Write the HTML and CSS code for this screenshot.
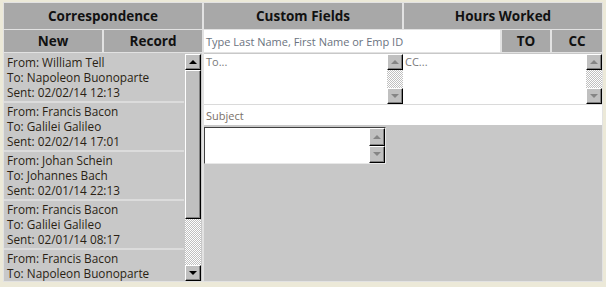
FILE: index.html
```html
<html>
<head>
<title>Correspondence</title>
<link rel="stylesheet" href="styles.css">
</head>
<body>

<div class="frame">
  <div class="head">Correspondence</div>
  <div class="head">Custom Fields</div>
  <div class="head">Hours Worked</div>

  <div class="tabs">
    <div class="head">New</div>
    <div class="head">Record</div>
  </div>

  <div class="search-row">
    <div class="search">Type Last Name, First Name or Emp ID</div>
    <div class="head">TO</div>
    <div class="head">CC</div>
  </div>

  <div class="list-pane">
    <div class="list">
      <div class="item">From: William Tell<br>To: Napoleon Buonoparte<br>Sent: 02/02/14 12:13</div>
      <div class="item">From: Francis Bacon<br>To: Galilei Galileo<br>Sent: 02/02/14 17:01</div>
      <div class="item">From: Johan Schein<br>To: Johannes Bach<br>Sent: 02/01/14 22:13</div>
      <div class="item">From: Francis Bacon<br>To: Galilei Galileo<br>Sent: 02/01/14 08:17</div>
      <div class="item">From: Francis Bacon<br>To: Napoleon Buonoparte</div>
    </div>
    <div class="vscroll">
      <div class="btn up"></div>
      <div class="thumb"></div>
      <div class="track"></div>
      <div class="btn down"></div>
    </div>
  </div>

  <div class="compose">
    <div class="addr-row">
      <div class="memo">
        <div class="memo-text">To...</div>
        <div class="vscroll">
          <div class="btn up off"></div>
          <div class="track"></div>
          <div class="btn down off"></div>
        </div>
      </div>
      <div class="memo">
        <div class="memo-text">CC...</div>
        <div class="vscroll">
          <div class="btn up off"></div>
          <div class="track"></div>
          <div class="btn down off"></div>
        </div>
      </div>
    </div>
    <div class="subject">Subject</div>
    <div class="body-box">
      <div class="memo-text"></div>
      <div class="vscroll">
        <div class="btn up off tall"></div>
        <div class="btn down off tall"></div>
      </div>
    </div>
  </div>
</div>

</body>
</html>
```

FILE: styles.css
```css
body{
margin:0;
background:#ece9d8;
font-family:"Open Sans", sans-serif;
font-size:11px;
color:#222;}

.frame{
margin:2px 0 0 3px;
width:598px;
height:278px;
padding:1px;
background:#e2e2e2;
display:grid;
grid-template-columns:198px 198px 198px;
grid-template-rows:26px 22px 1fr;
gap:1px 2px;}

.head{
background:#a8a8a8;
display:flex;
align-items:center;
justify-content:center;
font-weight:700;
font-size:13.5px;
color:#111;}

.tabs{
display:grid;
grid-template-columns:1fr 1fr;
gap:2px;}

.search-row{
grid-column:2 / 4;
display:grid;
grid-template-columns:1fr 48px 50px;
gap:2px;}

.search{
background:#fff;
color:#6b7380;
padding-left:2px;
display:flex;
align-items:center;}

.list-pane{
background:#c8c8c8;
display:grid;
grid-template-columns:1fr 16px;
gap:1px;
padding:1px 1px 0 0;
overflow:hidden;}

.list{
background:#dcdcdc;
display:flex;
flex-direction:column;
gap:2px;
overflow:hidden;}

.item{
flex:0 0 47px;
background:#c8c8c8;
padding:1px 0 0 3px;
box-sizing:border-box;
font-size:11.8px;
line-height:15px;
color:#2a1f14;
white-space:nowrap;}

.vscroll{
display:flex;
flex-direction:column;}

.btn{
flex:0 0 16px;
box-sizing:border-box;
background:#c0c0c0;
border:1px solid;
border-color:#fff #000 #000 #fff;
box-shadow:inset -1px -1px #808080;
display:flex;
align-items:center;
justify-content:center;}

.btn.tall{flex:1 1 0;}

.btn::after{
content:"";
width:0;
height:0;
border-left:4px solid transparent;
border-right:4px solid transparent;}

.up::after{border-bottom:4px solid #000;}
.down::after{border-top:4px solid #000;}
.off.up::after{border-bottom-color:#858585;}
.off.down::after{border-top-color:#858585;}

.thumb{
flex:0 0 149px;
box-sizing:border-box;
background:#c0c0c0;
border:1px solid;
border-color:#fff #000 #000 #fff;
box-shadow:inset -1px -1px #808080;}

.track{
flex:1;
background:repeating-conic-gradient(#c0c0c0 0 25%, #fff 0 50%) 0 0/2px 2px;}

.compose{
grid-column:2 / 4;
background:#c8c8c8;
padding-top:1px;
display:flex;
flex-direction:column;}

.addr-row{
height:50px;
display:grid;
grid-template-columns:199px 1fr;}

.memo{
display:grid;
grid-template-columns:1fr 16px;
background:#fff;}

.memo-text{
background:#fff;
color:#7a7a7a;
padding:0 2px;}

.subject{
height:20px;
border-top:1px solid #dadada;
background:#fff;
color:#7a7068;
padding-left:2px;
display:flex;
align-items:center;}

.body-box{
margin-top:2px;
width:182px;
height:37px;
box-sizing:border-box;
border:1px solid;
border-color:#404040 #e8e8e8 #e8e8e8 #404040;
box-shadow:inset 1px 1px #000;
display:grid;
grid-template-columns:1fr 16px;
background:#fff;}
```
